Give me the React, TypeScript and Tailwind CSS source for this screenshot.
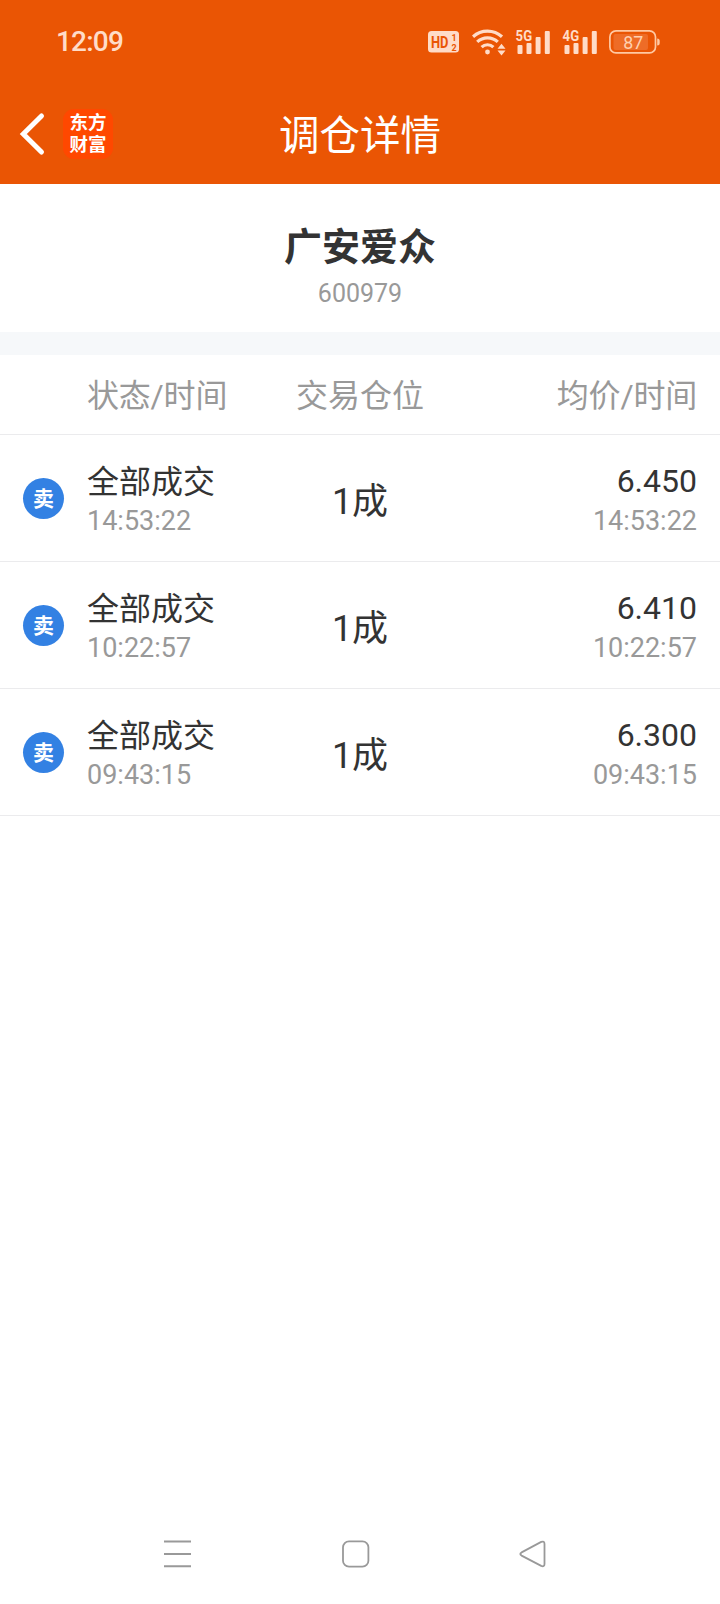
import React from 'react';

interface Trade {
  status: string;
  time: string;
  position: string;
  price: string;
}

const trades: Trade[] = [
  { status: '全部成交', time: '14:53:22', position: '1成', price: '6.450' },
  { status: '全部成交', time: '10:22:57', position: '1成', price: '6.410' },
  { status: '全部成交', time: '09:43:15', position: '1成', price: '6.300' },
];

interface SignalProps {
  label: string;
}

const Signal: React.FC<SignalProps> = ({ label }) => (
  <svg className="w-[36px] h-[32px]" viewBox="0 -2 36 32" fill="#ffdcc8">
    <text x="0.6" y="13" fontSize="15.5" fontWeight="700" textLength="16.5" lengthAdjust="spacingAndGlyphs">
      {label}
    </text>
    <rect x="2.5" y="17" width="5" height="9" rx="1" />
    <rect x="11.5" y="15" width="5" height="11" rx="1" />
    <rect x="20.6" y="9" width="5" height="17" rx="1" />
    <rect x="29.8" y="3" width="5" height="23" rx="1" />
  </svg>
);

const StatusBar: React.FC = () => (
  <div className="flex h-[84px] items-center pl-[56px] pr-[59px] text-[#ffdcc8]">
    <span className="flex-1 text-[28px] font-medium leading-none tracking-[-0.8px]">12:09</span>
    <div className="flex items-center">
      {/* HD voice */}
      <svg className="w-[31px] h-[22px]" viewBox="0 0 31 22">
        <rect width="31" height="21.5" rx="3.5" fill="#ffdcc8" />
        <g fill="#ea5504" fontWeight="700">
          <text x="3" y="17" fontSize="17" textLength="17.5" lengthAdjust="spacingAndGlyphs">HD</text>
          <text x="23.5" y="10" fontSize="9">1</text>
          <text x="23.5" y="19.5" fontSize="9">2</text>
        </g>
      </svg>
      {/* Wifi */}
      <svg className="ml-[13px] w-[34px] h-[28px]" viewBox="0 0 34 28" fill="none" stroke="#ffdcc8" strokeWidth="3.2">
        <path d="M1 8.7a21.5 21.5 0 0 1 29 0" />
        <path d="M5.2 13.9a15 15 0 0 1 20.6 0" />
        <path d="M9.6 19.1a8.6 8.6 0 0 1 11.8 0" />
        <circle cx="15.5" cy="24" r="2.4" fill="#ffdcc8" stroke="none" />
        <path d="M29.5 15.8l4 5h-8zM29.5 27.5l4-5h-8z" fill="#ffdcc8" stroke="none" />
      </svg>
      <div className="ml-[9px]">
        <Signal label="5G" />
      </div>
      <div className="ml-[11px]">
        <Signal label="4G" />
      </div>
      {/* Battery */}
      <svg className="ml-[11px] w-[52px] h-[26px]" viewBox="0 0 52 26">
        <rect x="0.9" y="1.9" width="45.6" height="22" rx="6" fill="none" stroke="#ffc9a3" strokeWidth="1.7" />
        <rect x="4.5" y="5" width="34.5" height="16" rx="2" fill="#ee6c27" />
        <path d="M48.2 9.5q2.5 0 2.5 2.5v2q0 2.5-2.5 2.5z" fill="#ffc9a3" />
        <text x="14.2" y="19.9" fontSize="19" fill="#ffd0b0" textLength="20" lengthAdjust="spacingAndGlyphs">87</text>
      </svg>
    </div>
  </div>
);

const TitleBar: React.FC = () => (
  <div className="grid h-[100px] grid-cols-[1fr_auto_1fr] items-center pb-[1px]">
    <div className="flex items-center pl-[19px]">
      <svg className="w-[27px] h-[44px]" viewBox="0 0 27 44" fill="none" stroke="#fff" strokeWidth="5">
        <path d="M22.5 4L4.3 22l18.2 18" strokeLinecap="round" strokeLinejoin="miter" />
      </svg>
      <div className="ml-[17px] flex h-[50px] w-[50px] flex-col items-center justify-center rounded-[11px] bg-[#ff4800] pt-px text-[18.5px] font-bold leading-[22px] text-white">
        <span>东方</span>
        <span>财富</span>
      </div>
    </div>
    <h1 className="pt-[6px] text-[40.5px] leading-none text-white">调仓详情</h1>
    <div />
  </div>
);

const TradeRow: React.FC<{ trade: Trade }> = ({ trade }) => (
  <div className="flex h-[127px] items-center border-b border-[#ebebed] px-[23px]">
    <div className="flex h-[41px] w-[41px] items-center justify-center rounded-full bg-[#3381e3] pt-[2px] text-[21px] font-bold leading-none text-white">
      卖
    </div>
    <div className="ml-[23px] w-[203px] pt-[6px]">
      <div className="text-[32px] leading-[40px] text-[#333]">{trade.status}</div>
      <div className="text-[27px] leading-[38px] text-[#999]">{trade.time}</div>
    </div>
    <div className="w-[140px] pt-[7px] text-center text-[36px] leading-none text-[#333]">{trade.position}</div>
    <div className="flex-1 pt-[5px] text-right">
      <div className="text-[32px] leading-[39px] text-[#333]">{trade.price}</div>
      <div className="pt-px text-[27px] leading-[38px] text-[#999]">{trade.time}</div>
    </div>
  </div>
);

const NavBar: React.FC = () => (
  <div className="flex h-[100px] items-center justify-between pl-[164px] pr-[173px]">
    <svg className="w-[27px] h-[28px]" viewBox="0 0 27 28" stroke="#999" strokeWidth="2">
      <path d="M0 1.5h27M0 14h27M0 26.2h27" />
    </svg>
    <svg className="ml-[2px] w-[28px] h-[28px]" viewBox="0 0 28 28" fill="none" stroke="#999" strokeWidth="1.8">
      <rect x="1" y="1.3" width="25.4" height="25.4" rx="6" />
    </svg>
    <svg className="w-[28px] h-[28px]" viewBox="0 0 28 28" fill="none" stroke="#999" strokeWidth="1.8">
      <path d="M2.6 12.4L22.2 1.9Q25.5 .6 25.5 4v20q0 3.2-3.3 1.9L2.6 15.6q-2.6-1.6 0-3.2z" />
    </svg>
  </div>
);

export default function App() {
  return (
    <div className="flex h-[1604px] w-[720px] flex-col bg-white font-[Roboto,'Noto_Sans_CJK_SC',sans-serif]">
      <header className="bg-[#ea5504]">
        <StatusBar />
        <TitleBar />
      </header>

      <section className="flex h-[148px] flex-col items-center pt-[40px]">
        <h2 className="text-[38px] font-bold leading-[46px] text-[#333]">广安爱众</h2>
        <p className="pt-px text-[25px] leading-[46px] text-[#999]">600979</p>
      </section>

      <div className="h-[23px] bg-[#f6f8fa]" />

      <main className="flex-1">
        <div className="flex h-[80px] items-center border-b border-[#ebebed] px-[23px] pt-[3px] text-[32px] text-[#999]">
          <div className="ml-[64px] w-[203px] tracking-[-0.2px]">状态/时间</div>
          <div className="w-[140px] whitespace-nowrap text-center">交易仓位</div>
          <div className="flex-1 text-right tracking-[-0.2px]">均价/时间</div>
        </div>
        {trades.map((trade) => (
          <TradeRow key={trade.time} trade={trade} />
        ))}
      </main>

      <NavBar />
    </div>
  );
}
